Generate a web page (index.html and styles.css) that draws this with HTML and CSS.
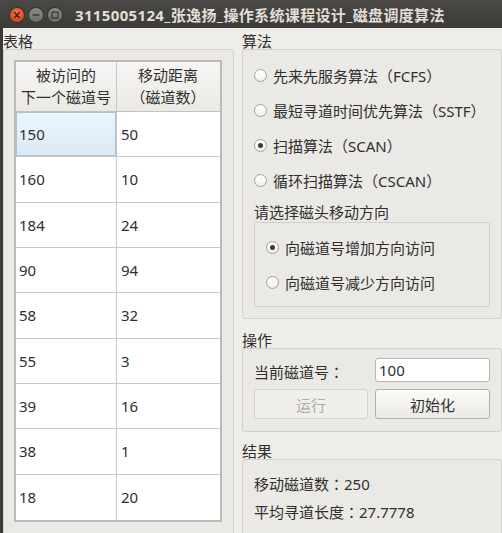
FILE: index.html
```html
<!DOCTYPE html>
<html>
<head>
<meta charset="utf-8">
<link rel="stylesheet" href="styles.css">
</head>
<body>
<div class="window">
  <div class="titlebar">
    <div class="btns">
      <span class="wbtn close"><svg width="14" height="14" viewBox="0 0 14 14"><path d="M4.6 4.6 L9.4 9.4 M9.4 4.6 L4.6 9.4" stroke="#3a2418" stroke-width="1.4" stroke-linecap="round"/></svg></span>
      <span class="wbtn"><svg width="14" height="14" viewBox="0 0 14 14"><path d="M3.5 7 H10.5" stroke="#3a3935" stroke-width="1.4"/></svg></span>
      <span class="wbtn"><svg width="14" height="14" viewBox="0 0 14 14"><rect x="4" y="4" width="6" height="6" fill="none" stroke="#3a3935" stroke-width="1.3"/></svg></span>
    </div>
    <div class="title">3115005124_张逸扬_操作系统课程设计_磁盘调度算法</div>
  </div>
  <div class="content">
    <div class="leftcol">
      <div class="glabel">表格</div>
      <div class="gbox tablebox">
        <div class="table">
          <div class="thead">
            <div class="th">被访问的<br>下一个磁道号</div>
            <div class="th">移动距离<br>（磁道数）</div>
          </div>
          <div class="tr"><div class="td sel">150</div><div class="td">50</div></div>
          <div class="tr"><div class="td">160</div><div class="td">10</div></div>
          <div class="tr"><div class="td">184</div><div class="td">24</div></div>
          <div class="tr"><div class="td">90</div><div class="td">94</div></div>
          <div class="tr"><div class="td">58</div><div class="td">32</div></div>
          <div class="tr"><div class="td">55</div><div class="td">3</div></div>
          <div class="tr"><div class="td">39</div><div class="td">16</div></div>
          <div class="tr"><div class="td">38</div><div class="td">1</div></div>
          <div class="tr"><div class="td">18</div><div class="td">20</div></div>
        </div>
      </div>
    </div>
    <div class="rightcol">
      <div class="glabel">算法</div>
      <div class="gbox algbox">
        <div class="radio"><span class="rc"></span>先来先服务算法（FCFS）</div>
        <div class="radio"><span class="rc"></span>最短寻道时间优先算法（SSTF）</div>
        <div class="radio"><span class="rc on"></span>扫描算法（SCAN）</div>
        <div class="radio"><span class="rc"></span>循环扫描算法（CSCAN）</div>
        <div class="sublabel">请选择磁头移动方向</div>
        <div class="gbox dirbox">
          <div class="radio"><span class="rc on"></span>向磁道号增加方向访问</div>
          <div class="radio"><span class="rc"></span>向磁道号减少方向访问</div>
        </div>
      </div>
      <div class="glabel gap">操作</div>
      <div class="gbox opbox">
        <div class="oplabel">当前磁道号<span class="colon">：</span></div>
        <div class="input">100</div>
        <div class="button disabled">运行</div>
        <div class="button">初始化</div>
      </div>
      <div class="glabel gap2">结果</div>
      <div class="gbox resbox">
        <div class="resline">移动磁道数<span class="colon">：</span>250</div>
        <div class="resline">平均寻道长度<span class="colon">：</span>27.7778</div>
      </div>
    </div>
  </div>
</div>
</body>
</html>
```
FILE: styles.css
```css
html, body {
  margin: 0;
  padding: 0;
  width: 502px;
  height: 533px;
  overflow: hidden;
  background: #3a3a38;
}
body {
  font-family: "Noto Sans", "Noto Sans CJK SC", sans-serif;
  font-size: 15px;
  color: #302f2e;
}
.window {
  display: flex;
  flex-direction: column;
  width: 502px;
  height: 533px;
}
.titlebar {
  height: 28px;
  flex: none;
  display: flex;
  align-items: center;
  background: linear-gradient(#4a4945, #3c3b37);
  color: #e2ded6;
}
.btns {
  display: flex;
  gap: 5px;
  padding-left: 10px;
  padding-top: 2px;
}
.wbtn {
  width: 14px;
  height: 14px;
  border-radius: 50%;
  background: linear-gradient(#8c8b87, #6d6c68);
  box-shadow: 0 0 0 1px #353430;
  display: flex;
}
.wbtn.close {
  background: radial-gradient(circle at 50% 35%, #f37a4a, #dd4814 70%);
}
.title {
  font-family: "Noto Sans", "Noto Sans CJK SC", sans-serif;
  font-weight: bold;
  font-size: 15px;
  padding-left: 13px;
  letter-spacing: 0.35px;
  white-space: nowrap;
}
.colon {
  font-family: "Noto Sans CJK JP", sans-serif;
}
.content {
  flex: 1;
  display: flex;
  gap: 8px;
  margin-left: 3px;
  background: #efede9;
  min-height: 0;
}
.leftcol {
  width: 231px;
  display: flex;
  flex-direction: column;
  flex: none;
}
.rightcol {
  flex: 1;
  display: flex;
  flex-direction: column;
  min-width: 0;
}
.glabel {
  padding-top: 4px;
  line-height: 18px;
  height: 17px;
}
.glabel.gap { margin-top: 8px; }
.glabel.gap2 { margin-top: 6px; }
.gbox {
  border: 1px solid #d4d1cb;
  border-radius: 3px;
  background: #ebe9e5;
}
.tablebox {
  flex: 1;
  padding: 10px 10px 0 10px;
  margin-bottom: -4px;
}
.table {
  width: 204px;
  border: 2px solid #bebbb6;
  background: #ffffff;
}
.thead {
  display: grid;
  grid-template-columns: 101px 102px;
  height: 49px;
  border-bottom: 1px solid #c4c2be;
  background: linear-gradient(#f7f6f4, #ebe9e6);
}
.th {
  text-align: center;
  line-height: 22px;
  padding-top: 2px;
}
.th:first-child { border-right: 1px solid #c8c6c2; }
.tr {
  display: grid;
  grid-template-columns: 101px 102px;
  height: 45.33px;
  border-bottom: 1px solid #c8c8c8;
  box-sizing: border-box;
}
.tr:last-child { border-bottom: none; }
.td {
  display: flex;
  align-items: center;
  padding-left: 3px;
}
.td:first-child { border-right: 1px solid #c8c8c8; }
.td:nth-child(2) { padding-left: 4px; }
.td.sel {
  background: linear-gradient(#eaf5fd, #dde9f2);
  box-shadow: inset 0 0 0 1px #aac3d8;
}
.algbox {
  padding: 8px 11px 11px 11px;
}
.radio {
  height: 35px;
  display: flex;
  align-items: center;
  gap: 6px;
  white-space: nowrap;
}
.rc {
  width: 11px;
  height: 11px;
  border-radius: 50%;
  border: 1px solid #a4a09a;
  background: linear-gradient(#ffffff, #f1f0ee);
  display: flex;
  align-items: center;
  justify-content: center;
  flex: none;
}
.rc.on::after {
  content: "";
  width: 5px;
  height: 5px;
  border-radius: 50%;
  background: #3a3a3a;
}
.sublabel {
  padding-top: 4px;
  line-height: 20px;
  height: 20px;
}
.dirbox {
  padding: 7px 11px 6px 11px;
}
.opbox {
  display: grid;
  grid-template-columns: 114px 115px;
  grid-template-rows: 24px 30px;
  column-gap: 7px;
  row-gap: 7px;
  padding: 9px 11px 12px 11px;
}
.oplabel {
  display: flex;
  align-items: center;
  padding-top: 3px;
}
.input {
  background: #ffffff;
  border: 1px solid #b9b5af;
  border-radius: 3px;
  display: flex;
  align-items: center;
  padding-left: 3px;
  box-sizing: border-box;
}
.button {
  border: 1px solid #b3afa9;
  border-radius: 3px;
  background: linear-gradient(#fbfbfa, #ebe9e6);
  display: flex;
  align-items: center;
  justify-content: center;
  box-sizing: border-box;
}
.button.disabled {
  border-color: #d5d2cd;
  background: #f0efec;
  color: #aeaca8;
}
.resbox {
  flex: 1;
  padding: 10px 11px 0 11px;
  margin-bottom: -4px;
}
.resline {
  height: 28px;
  line-height: 28px;
}
```
